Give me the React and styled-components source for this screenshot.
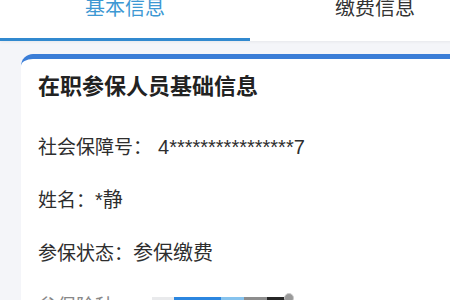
import React from 'react';
import styled, { createGlobalStyle } from 'styled-components';

const GlobalStyle = createGlobalStyle`
  html, body {
    margin: 0;
    padding: 0;
    overflow: hidden;
    background: #f4f5f9;
  }
  body {
    font-family: "Noto Sans CJK SC", "Noto Sans", sans-serif;
  }
`;

const tabs = [
  { key: 'basic', label: '基本信息', active: true },
  { key: 'pay', label: '缴费信息', active: false }
];

const fields = [
  { label: '社会保障号：', value: '4****************7', gap: 6 },
  { label: '姓名：', value: '*静' },
  { label: '参保状态：', value: '参保缴费' }
];

const mosaic = [
  { color: '#e9eaec', width: 22 },
  { color: '#2b86e0', width: 47 },
  { color: '#86c3ee', width: 23 },
  { color: '#8d8d8d', width: 23 },
  { color: '#262626', width: 22 }
];

const App = () => {
  return (
    <>
      <GlobalStyle />
      <Page>
        <TabBar>
          {tabs.map(tab => (
            <Tab key={tab.key} $active={tab.active}>
              <TabLabel $active={tab.active}>{tab.label}</TabLabel>
            </Tab>
          ))}
        </TabBar>

        <Body>
          <Card>
            <CardTitle>在职参保人员基础信息</CardTitle>
            {fields.map(f => (
              <Field key={f.label}>
                {f.label}
                <Value $gap={f.gap}>{f.value}</Value>
              </Field>
            ))}
            <Field $faded>
              参保险种：
              <Mosaic>
                {mosaic.map((m, i) => (
                  <MosaicCell key={i} style={{ width: m.width, background: m.color }} />
                ))}
                <MosaicDot />
              </Mosaic>
            </Field>
          </Card>
        </Body>
      </Page>
    </>
  );
};

const Page = styled.div`
  width: 500px;
  min-height: 300px;
  background: #f4f5f9;
`;

const TabBar = styled.div`
  display: flex;
  height: 41px;
  background: #fff;
  box-shadow: 0 1px 3px rgba(0, 0, 0, 0.06);
  position: relative;
  z-index: 1;
`;

const Tab = styled.div`
  flex: 1;
  display: flex;
  justify-content: center;
  align-items: flex-start;
  box-sizing: border-box;
  border-bottom: 3px solid ${props => props.$active ? '#3189cf' : 'transparent'};
`;

const TabLabel = styled.span`
  margin-top: -3px;
  font-size: 20px;
  line-height: 20px;
  color: ${props => props.$active ? '#3d98d3' : '#333'};
`;

const Body = styled.div`
  padding: 13px 0 0 21px;
`;

const Card = styled.div`
  background: #fff;
  border-top: 5px solid #3a7dd7;
  border-top-left-radius: 12px;
  padding: 10px 18px 0 17px;
`;

const CardTitle = styled.div`
  font-size: 22px;
  line-height: 30px;
  font-weight: 700;
  color: #222;
  margin-bottom: 20px;
`;

const Field = styled.div`
  height: 53px;
  font-size: 19px;
  line-height: 53px;
  color: ${props => props.$faded ? '#888' : '#2e2e2e'};
  white-space: nowrap;
`;

const Value = styled.span`
  margin-left: ${props => props.$gap || 0}px;
  font-family: "Liberation Sans", "Noto Sans CJK SC", sans-serif;
  font-size: 20px;
`;

const Mosaic = styled.span`
  position: relative;
  display: inline-flex;
  vertical-align: middle;
  height: 22px;
  margin-left: 19px;
`;

const MosaicCell = styled.span`
  display: block;
  height: 100%;
`;

const MosaicDot = styled.span`
  position: absolute;
  right: -5px;
  top: -4px;
  width: 8px;
  height: 8px;
  border-radius: 50%;
  background: #9a9a9a;
  border: 1px solid #ccc;
`;

export default App;
